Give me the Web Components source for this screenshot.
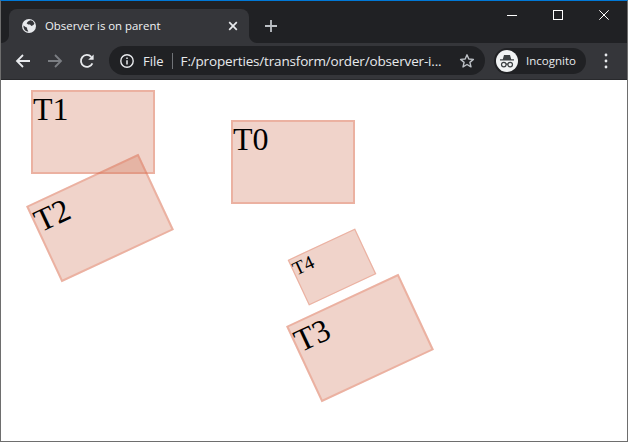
<!doctype html>
<html>
<head>
<meta charset="utf-8">
<title>Observer is on parent</title>
<style>
  html, body { margin: 0; height: 100%; background: #fff; }
</style>
</head>
<body>
<browser-window>
  <demo-box slot="page" label="T1" style="--x:30px;--y:10px"></demo-box>
  <demo-box slot="page" label="T2" style="--x:36.5px;--y:96px;--t:rotate(-25deg)"></demo-box>
  <demo-box slot="page" label="T0" style="--x:230px;--y:40px"></demo-box>
  <demo-box slot="page" label="T3" style="--x:297px;--y:216px;--t:rotate(-25deg)"></demo-box>
  <demo-box slot="page" label="T4" style="--x:268.5px;--y:144.5px;--t:scale(.6) rotate(-25deg)"></demo-box>
</browser-window>

<script>
const uiFont = `"Open Sans", "Noto Sans", "Liberation Sans", sans-serif`

customElements.define('browser-tab', class extends HTMLElement {
  constructor() {
    super()
    this.attachShadow({ mode: 'open' }).innerHTML = `
    <style>
      :host {
        position: relative;
        display: flex;
        align-items: center;
        width: 240px;
        height: 34px;
        box-sizing: border-box;
        padding: 0 11px 0 13px;
        margin-left: 8px;
        background: #35363a;
        color: #f1f3f4;
        border-radius: 8px 8px 0 0;
        font: 11.4px ${uiFont};
      }
      :host::before, :host::after {
        content: '';
        position: absolute;
        bottom: 0;
        width: 8px;
        height: 8px;
      }
      :host::before { left: -8px; background: radial-gradient(circle at 0 0, #202124 7.5px, #35363a 8.5px); }
      :host::after { right: -8px; background: radial-gradient(circle at 100% 0, #202124 7.5px, #35363a 8.5px); }
      .title { flex: 1; margin: 0 0 1px 9px; white-space: nowrap; }
      svg { display: block; flex: none; }
    </style>
    <svg width="14" height="14" viewBox="0 0 14 14">
      <circle cx="7" cy="7" r="7" fill="#e8eaed"/>
      <path d="M8.4 1.2 6 2.4 4.6 4.2 6.2 5.6 8 5.4 9.4 7l2-1 1-1.6-1.6-2.4z" fill="#35363a"/>
      <path d="M1.4 6.6 4 8.2l1 .4.2 1.6 1.2 2.2-1.4.2-2.2-1.4-1.2-2.4z" fill="#35363a"/>
    </svg>
    <span class="title"><slot></slot></span>
    <svg width="10" height="10" viewBox="0 0 10 10">
      <path d="M1.2 1.2 8.8 8.8M8.8 1.2 1.2 8.8" stroke="#e8eaed" stroke-width="1.7" fill="none"/>
    </svg>`
  }
})

customElements.define('window-controls', class extends HTMLElement {
  constructor() {
    super()
    this.attachShadow({ mode: 'open' }).innerHTML = `
    <style>
      :host { display: flex; align-items: flex-start; margin-left: auto; }
      div { width: 46px; height: 28px; display: flex; align-items: center; justify-content: center; }
      svg { display: block; }
    </style>
    <div><svg width="10" height="10" viewBox="0 0 10 10"><path d="M0 5.5h10" stroke="#fff" fill="none"/></svg></div>
    <div><svg width="10" height="10" viewBox="0 0 10 10"><rect x=".5" y=".5" width="9" height="9" stroke="#fff" fill="none"/></svg></div>
    <div><svg width="10" height="10" viewBox="0 0 10 10"><path d="M.3.3l9.4 9.4M9.7.3.3 9.7" stroke="#fff" fill="none"/></svg></div>`
  }
})

customElements.define('address-box', class extends HTMLElement {
  constructor() {
    super()
    this.attachShadow({ mode: 'open' }).innerHTML = `
    <style>
      :host {
        display: flex;
        align-items: center;
        width: 376px;
        height: 29px;
        box-sizing: border-box;
        padding: 0 10px 0 11px;
        background: #202124;
        border-radius: 15px;
        color: #e8eaed;
        font: 13px ${uiFont};
      }
      svg { display: block; flex: none; }
      .scheme { margin-left: 9px; }
      .sep { width: 1px; height: 16px; background: #707377; margin: 0 8px 0 8px; }
      .url { flex: 1; white-space: nowrap; font-size: 13.5px; letter-spacing: -.17px; }
    </style>
    <svg width="14" height="14" viewBox="0 0 14 14">
      <circle cx="7" cy="7" r="6.2" fill="none" stroke="#e8eaed" stroke-width="1.4"/>
      <path d="M7 6.2v4.2M7 3.4v1.5" stroke="#e8eaed" stroke-width="1.5" fill="none"/>
    </svg>
    <span class="scheme">File</span>
    <span class="sep"></span>
    <span class="url"><slot></slot></span>
    <svg width="16" height="16" viewBox="0 0 16 16">
      <path d="M8 1.8l1.8 4.2 4.6.4-3.5 3 1.1 4.5L8 11.5l-4 2.4 1.1-4.5-3.5-3 4.6-.4z" fill="none" stroke="#bdc1c6" stroke-width="1.4" stroke-linejoin="round"/>
    </svg>`
  }
})

customElements.define('incognito-chip', class extends HTMLElement {
  constructor() {
    super()
    this.attachShadow({ mode: 'open' }).innerHTML = `
    <style>
      :host {
        display: flex;
        align-items: center;
        width: 92px;
        height: 26px;
        box-sizing: border-box;
        padding-left: 2px;
        background: #202124;
        border-radius: 13px;
        color: #e8eaed;
        font: 11.5px ${uiFont};
      }
      svg { display: block; flex: none; margin-right: 8px; }
    </style>
    <svg width="22" height="22" viewBox="0 0 22 22">
      <circle cx="11" cy="11" r="11" fill="#f1f3f4"/>
      <path d="M8 5h6l1.2 4.200H18v1.300H4V9.200h2.800z" fill="#3c4043"/>
      <circle cx="7.800" cy="14.600" r="2.300" fill="none" stroke="#3c4043" stroke-width="1.200"/>
      <circle cx="14.200" cy="14.600" r="2.300" fill="none" stroke="#3c4043" stroke-width="1.200"/>
      <path d="M10 14.200h2" stroke="#3c4043" stroke-width="1.200"/>
    </svg>
    <slot></slot>`
  }
})

customElements.define('nav-toolbar', class extends HTMLElement {
  constructor() {
    super()
    this.attachShadow({ mode: 'open' }).innerHTML = `
    <style>
      :host {
        display: flex;
        align-items: center;
        height: 37px;
        flex: none;
        box-sizing: border-box;
        background: #35363a;
        border-bottom: 1px solid #28292c;
        padding: 0 0 1px 0;
      }
      svg { display: block; flex: none; }
      .b { width: 32px; display: flex; justify-content: center; }
      .nav { display: flex; margin: 0 6px 0 6px; }
      .more { margin-left: 11px; width: 18px; display: flex; justify-content: center; }
      ::slotted(address-box) { margin-right: 9px; }
    </style>
    <div class="nav">
      <div class="b"><svg width="16" height="16" viewBox="0 0 16 16"><path d="M15 8H2M8 2 2 8l6 6" fill="none" stroke="#e8eaed" stroke-width="1.800"/></svg></div>
      <div class="b"><svg width="16" height="16" viewBox="0 0 16 16"><path d="M1 8h13M8 2l6 6-6 6" fill="none" stroke="#7b7e83" stroke-width="1.800"/></svg></div>
      <div class="b"><svg width="16" height="16" viewBox="0 0 16 16"><path d="M13.400 10.400A6 6 0 1 1 12.300 3.800" fill="none" stroke="#e8eaed" stroke-width="1.800"/><path d="M14.600 1.400v5.400H9.200z" fill="#e8eaed"/></svg></div>
    </div>
    <slot></slot>
    <div class="more"><svg width="4" height="16" viewBox="0 0 4 16"><circle cx="2" cy="2" r="1.400" fill="#e8eaed"/><circle cx="2" cy="8" r="1.400" fill="#e8eaed"/><circle cx="2" cy="14" r="1.400" fill="#e8eaed"/></svg></div>`
  }
})

customElements.define('demo-box', class extends HTMLElement {
  constructor() {
    super()
    this.attachShadow({ mode: 'open' }).innerHTML = `
    <style>
      :host {
        position: absolute;
        left: var(--x);
        top: var(--y);
        width: 120px;
        height: 80px;
        background: rgba(205, 104, 72, .29);
        border: 2px solid rgba(225, 110, 82, .34);
        transform: var(--t, none);
        font: 32px/35px "Liberation Serif", "Times New Roman", serif;
        color: #000;
      }
    </style>
    <span></span>`
    this.shadowRoot.querySelector('span').textContent = this.getAttribute('label')
  }
})

customElements.define('browser-window', class extends HTMLElement {
  constructor() {
    super()
    this.attachShadow({ mode: 'open' }).innerHTML = `
    <style>
      :host {
        display: flex;
        flex-direction: column;
        height: 100%;
        box-sizing: border-box;
        border: 1px solid #6e6e6e;
        border-top-color: #0078d7;
        overflow: hidden;
      }
      .strip {
        display: flex;
        align-items: flex-end;
        height: 42px;
        flex: none;
        background: #202124;
      }
      .plus { align-self: flex-end; height: 34px; display: flex; align-items: center; margin-left: 16px; }
      .plus svg { display: block; }
      window-controls { align-self: flex-start; }
      .page { position: relative; flex: 1; background: #fff; }
    </style>
    <div class="strip">
      <browser-tab>Observer is on parent</browser-tab>
      <div class="plus"><svg width="12" height="12" viewBox="0 0 12 12"><path d="M6 0v12M0 6h12" stroke="#bdc1c6" stroke-width="1.800" fill="none"/></svg></div>
      <window-controls></window-controls>
    </div>
    <nav-toolbar>
      <address-box>F:/properties/transform/order/observer-i...</address-box>
      <incognito-chip>Incognito</incognito-chip>
    </nav-toolbar>
    <div class="page"><slot name="page"></slot></div>`
  }
})
</script>
</body>
</html>
